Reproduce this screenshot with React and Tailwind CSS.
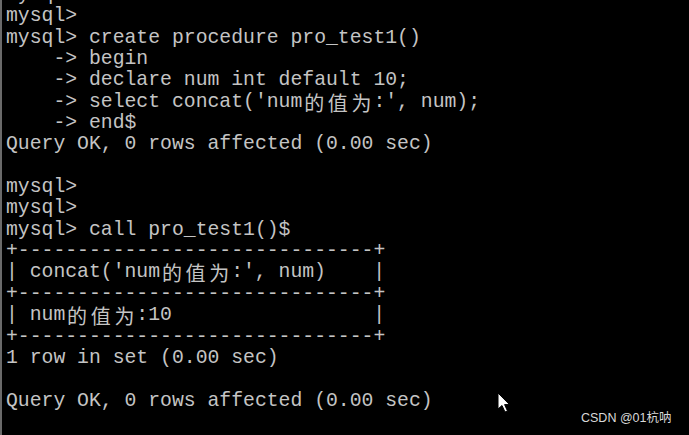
import React from "react";

const lines = [
  "mysql>",
  "mysql>",
  "mysql> create procedure pro_test1()",
  "    -> begin",
  "    -> declare num int default 10;",
  "    -> select concat('num的值为:', num);",
  "    -> end$",
  "Query OK, 0 rows affected (0.00 sec)",
  "",
  "mysql>",
  "mysql>",
  "mysql> call pro_test1()$",
  "+------------------------------+",
  "| concat('num的值为:', num)    |",
  "+------------------------------+",
  "| num的值为:10                 |",
  "+------------------------------+",
  "1 row in set (0.00 sec)",
  "",
  "Query OK, 0 rows affected (0.00 sec)",
  "",
];

// CJK glyphs take two cells in the console
const Line = ({ text }) => {
  const parts = text.split(/([\u4e00-\u9fff])/);
  return (
    <div className="h-[21.35px] whitespace-pre">
      {parts.map((p, i) =>
        /[\u4e00-\u9fff]/.test(p) ? (
          <span key={i} className="inline-block align-top h-[21.35px] w-[23.7px] text-center leading-[21.35px] font-['Noto_Sans_CJK_SC',sans-serif] text-[20px]">
            {p}
          </span>
        ) : (
          <span key={i}>{p}</span>
        )
      )}
    </div>
  );
};

export default function App() {
  return (
    <div className="relative w-[689px] h-[435px] overflow-hidden bg-black border-l-2 border-[#6a6a6a]">
      <div className="pl-[4px] -mt-[15px] text-[#c4c4c4] text-[19.75px] leading-[21.35px] font-['Liberation_Mono','Courier_New',monospace]">
        {lines.map((l, i) => (
          <Line key={i} text={l} />
        ))}
      </div>

      <svg className="absolute left-[495px] top-[392px]" width="16" height="23" viewBox="0 0 16 23">
        <path d="M1 1 L1 17 L5 13.5 L8 20 L10.5 19 L7.6 12.6 L12.5 12.6 Z" fill="#ffffff" stroke="#000" strokeWidth="1" />
      </svg>

      <div className="absolute left-[579px] top-[409px] text-[12.5px] text-[#d8d8d8] font-['Liberation_Sans','Noto_Sans_CJK_SC',sans-serif]">
        CSDN @01杭呐
      </div>
    </div>
  );
}
